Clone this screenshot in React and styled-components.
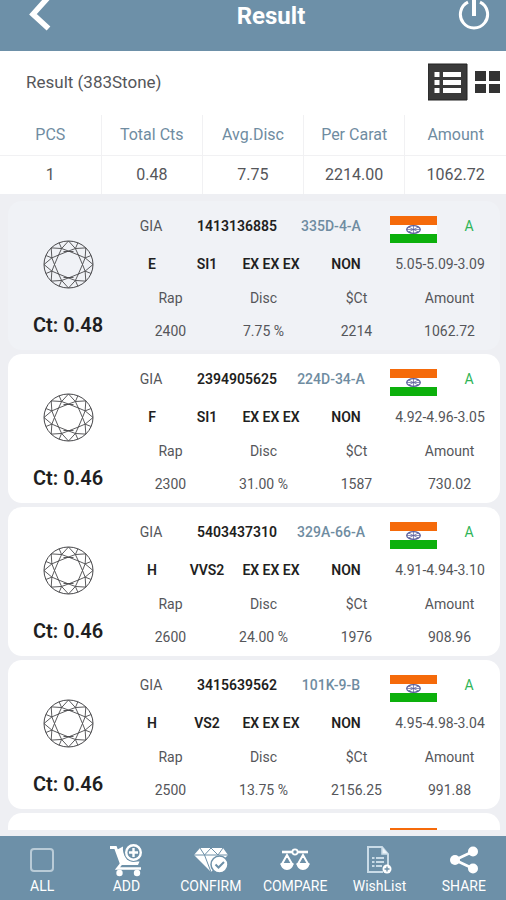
import React, { useState } from 'react';
import styled, { createGlobalStyle, ThemeProvider } from 'styled-components';

const theme = {
  colors: {
    primary: '#6d90a8',
    page: '#eeeff3',
    selected: '#f0f2f6',
    card: '#ffffff',
    border: '#f1f1f3',
    text: '#1f1f22',
    textSecondary: '#55565a',
    link: '#6f8ca1',
    available: '#2fb457',
  },
};

const GlobalStyle = createGlobalStyle`
  * {
    box-sizing: border-box;
  }

  body {
    margin: 0;
    font-family: Roboto, 'Liberation Sans', sans-serif;
    color: ${({ theme }) => theme.colors.text};
    background: ${({ theme }) => theme.colors.page};
  }

  button {
    font-family: inherit;
    border: 0;
    padding: 0;
    background: none;
    cursor: pointer;
  }
`;

const Screen = styled.div`
  display: flex;
  flex-direction: column;
  height: 100vh;
`;

const Header = styled.header`
  flex: none;
  display: grid;
  grid-template-columns: 72px 1fr 44px;
  align-items: center;
  padding: 0 10px 19px 18px;
  background: ${({ theme }) => theme.colors.primary};
  color: #fff;
`;

const HeaderTitle = styled.h1`
  margin: 0;
  font-size: 24px;
  line-height: 32px;
  font-weight: 700;
  text-align: center;
`;

const HeaderButton = styled.button`
  display: flex;
  justify-content: center;
  color: #fff;
  width: 44px;
  height: 32px;
`;

const Toolbar = styled.div`
  flex: none;
  display: flex;
  align-items: center;
  gap: 7px;
  padding: 12px 5px 14px 26px;
  background: #fff;
`;

const ToolbarTitle = styled.h2`
  flex: 1;
  margin: 0;
  font-size: 17px;
  line-height: 20px;
  font-weight: 400;
  color: ${({ theme }) => theme.colors.textSecondary};
`;

const ViewButton = styled.button`
  display: flex;
  color: #333;
`;

const SummaryTable = styled.table`
  flex: none;
  width: 100%;
  table-layout: fixed;
  border-collapse: collapse;
  background: #fff;
  text-align: center;
  font-size: 16px;

  th,
  td {
    height: 39px;
    padding: 0;
    font-weight: 400;
    color: ${({ theme }) => theme.colors.textSecondary};
  }

  th {
    height: 40px;
    color: ${({ theme }) => theme.colors.link};
    border-bottom: 1px solid ${({ theme }) => theme.colors.border};
  }

  th + th,
  td + td {
    border-left: 1px solid ${({ theme }) => theme.colors.border};
  }
`;

const StoneList = styled.ul`
  flex: 1;
  min-height: 0;
  margin: 0 0 6px;
  padding: 7px 6px 0 8px;
  list-style: none;
  overflow-y: auto;
  scrollbar-width: none;
`;

const StoneCard = styled.li`
  display: grid;
  grid-template-columns: 112px 1fr;
  margin-bottom: 4px;
  padding: 0 4px;
  border-radius: 14px;
  background: ${({ theme, $selected }) => ($selected ? theme.colors.selected : theme.colors.card)};
`;

const StoneShape = styled.div`
  display: flex;
  flex-direction: column;
  align-items: center;
  gap: 24px;
  padding-top: 39px;
`;

const Carat = styled.strong`
  font-size: 20px;
  line-height: 24px;
  font-weight: 600;
`;

const StoneDetails = styled.div`
  display: grid;
  grid-template-rows: 40px 36px 66px;
  padding: 5px 0 2px;
  font-size: 14px;
  line-height: 20px;
  color: ${({ theme }) => theme.colors.textSecondary};
`;

const DetailRow = styled.div`
  display: grid;
  grid-template-columns: 56fr 54fr 74fr 76fr 112fr;
  align-items: center;
  justify-items: center;
  white-space: nowrap;
`;

const CertificateRow = styled(DetailRow)`
  grid-template-columns: 54fr 118fr 70fr 94fr 18fr 18fr;
  align-items: start;
  padding-top: 10px;
`;

const Strong = styled.span`
  font-weight: 600;
  color: ${({ theme }) => theme.colors.text};
`;

const StoneLink = styled.a`
  font-weight: 500;
  color: ${({ theme }) => theme.colors.link};
  text-decoration: none;
`;

const Status = styled.span`
  color: ${({ theme }) => theme.colors.available};
`;

const FlagImage = styled.svg`
  grid-column: 4;
`;

const PriceList = styled.dl`
  display: grid;
  grid-template-columns: repeat(4, 1fr);
  margin: 0;
  text-align: center;
  line-height: 33px;

  dd {
    margin: 0;
  }
`;

const BottomBar = styled.nav`
  flex: none;
  display: grid;
  grid-template-columns: repeat(6, 1fr);
  background: ${({ theme }) => theme.colors.primary};
`;

const Action = styled.button`
  display: flex;
  flex-direction: column;
  align-items: center;
  gap: 2px;
  padding: 8px 0 6px;
  color: #fff;
  font-size: 14px;
  line-height: 16px;
  cursor: pointer;
`;

const ActionIcon = styled.span`
  display: flex;
  align-items: center;
  justify-content: center;
  height: 32px;
`;

const Checkbox = styled.input`
  appearance: none;
  width: 24px;
  height: 24px;
  margin: 0;
  border: 2px solid #b9cbd7;
  border-radius: 4px;

  &:checked {
    background: #fff;
  }
`;

const BackIcon = () => (
  <svg width="24" height="32" viewBox="0 0 24 32" fill="none" stroke="currentColor" strokeWidth="5.5">
    <path d="M20.5-3 5 14.2 20.5 28.5" />
  </svg>
);

const PowerIcon = () => (
  <svg width="32" height="32" viewBox="0 0 32 32" fill="none" stroke="currentColor" strokeWidth="3">
    <path d="M10 2.2A13.6 13.6 0 1 0 22 2.2" />
    <path d="M16-2v18" strokeWidth="4" />
  </svg>
);

const ListIcon = () => (
  <svg width="40" height="38" viewBox="0 0 40 38">
    <path d="M0 1h39v36H0z" fill="#3a3a3a" stroke="#222" />
    <path
      d="M6.500 9h5v5h-5zm0 8h5v5h-5zm0 8h5v5h-5zM15 9h18v5H15zm0 8h18v5H15zm0 8h18v5H15z"
      fill="#fff"
    />
  </svg>
);

const GridIcon = () => (
  <svg width="26" height="24" viewBox="0 0 26 24" fill="currentColor">
    <path d="M0 1h11v10H0zm14 0h11v10H14zM0 14h11v9H0zm14 0h11v9H14z" />
  </svg>
);

const point = (radius, angle) => {
  const rad = (angle * Math.PI) / 180;
  return `${(25.5 + radius * Math.sin(rad)).toFixed(2)} ${(24.5 - radius * 0.96 * Math.cos(rad)).toFixed(2)}`;
};

// Crown facets of a round brilliant, repeated every 45 degrees
const facets = Array.from({ length: 8 }, (_, i) => {
  const a = i * 45;
  return [
    `M${point(14, a)}L${point(14, a + 45)}`,
    `M${point(14, a)}L${point(18, a + 22.5)}L${point(14, a + 45)}`,
    `M${point(24.5, a)}L${point(18, a + 22.5)}L${point(24.5, a + 45)}`,
    `M${point(18, a + 22.5)}L${point(24.5, a + 22.5)}`,
  ].join('');
}).join('');

const RoundCut = () => (
  <svg width="51" height="49" viewBox="0 0 51 49" fill="none" stroke="#48484b">
    <ellipse cx="25.5" cy="24.5" rx="24.5" ry="23.5" />
    <path d={facets} strokeWidth="0.9" />
    <path d="M20.500 11.500h10M20.500 37.500h10" strokeWidth="0.9" />
  </svg>
);

const Flag = () => (
  <FlagImage width="47" height="27" viewBox="0 0 47 27" role="img" aria-label="India">
    <path d="M0 0h47v27H0z" fill="#fff" />
    <path d="M0 0h47v9H0z" fill="#f56a0a" />
    <path d="M0 18h47v9H0z" fill="#0cb00c" />
    <g fill="none" stroke="#5a5f9c">
      <ellipse cx="23.500" cy="13.500" rx="6.800" ry="3.800" strokeWidth="1.300" />
      <path d="M17 13.500h13M23.500 10v7M19 11.200l9 4.600M28 11.200l-9 4.600" strokeWidth="0.700" />
    </g>
  </FlagImage>
);

const CartIcon = () => (
  <svg width="34" height="34" viewBox="0 0 34 34" fill="none" stroke="#fff">
    <path d="M1 4.500h5.500l6 16.500" strokeWidth="3" />
    <path d="M7.500 7 14 3.500c-1 8 4 15 10 15h6.500L29 22H12z" fill="#fff" stroke="none" />
    <path d="m12 21-3.500 4.500H32" strokeWidth="2.600" />
    <circle cx="24.500" cy="9.500" r="9.500" fill="#6d90a8" stroke="none" />
    <circle cx="24.500" cy="9.500" r="7.300" strokeWidth="2.400" />
    <path d="M24.500 5v9M20 9.500h9" strokeWidth="2.400" />
    <circle cx="10.500" cy="30" r="3.200" fill="#fff" stroke="none" />
    <circle cx="28" cy="30" r="3.200" fill="#fff" stroke="none" />
  </svg>
);

const ConfirmIcon = () => (
  <svg width="34" height="28" viewBox="0 0 34 28" fill="none" stroke="#6d90a8">
    <path d="M6 2h23l5 7-17 17L0 9z" fill="#fff" stroke="none" />
    <path d="M0 9h34M6 2l4.500 7L17 2l7 7 5-7M10.500 9 17 26" strokeWidth="1" />
    <circle cx="25.500" cy="18.500" r="8.500" fill="#fff" strokeWidth="1.500" />
    <path d="m21.500 18.500 3 3 5.500-5.500" strokeWidth="2" />
  </svg>
);

const CompareIcon = () => (
  <svg width="30" height="26" viewBox="0 0 30 26" fill="none" stroke="#fff">
    <path d="M2 5h26" strokeWidth="2.600" />
    <circle cx="15" cy="5" r="2.600" fill="#6d90a8" strokeWidth="1.700" />
    <path d="M7 8 2 17h10zM23 8l-5 9h10z" strokeWidth="2" />
    <path d="M.5 16h13c0 4-3 7-6.500 7S.5 20 .5 16zM16.500 16h13c0 4-3 7-6.500 7s-6.500-3-6.500-7z" fill="#fff" stroke="none" />
  </svg>
);

const WishListIcon = () => (
  <svg width="26" height="30" viewBox="0 0 26 30" fill="none" stroke="#c9dbe7">
    <path d="M17 27H2V2h14l6 7v11" strokeWidth="2" />
    <path d="M16 2v7h6" fill="#eef5fa" strokeWidth="1.500" />
    <path d="M6 13h2.500M6 17h2.500M6 21h2.500M10 13h8M10 17h8M10 21h6" strokeWidth="1.800" />
    <circle cx="21" cy="24" r="4.500" fill="#fff" stroke="none" />
    <path d="M21 21.500v5M18.500 24h5" stroke="#6d90a8" strokeWidth="1.300" />
  </svg>
);

const ShareIcon = () => (
  <svg width="30" height="28" viewBox="0 0 30 28" fill="#fff">
    <path d="M24 5.500 6 14l18 8.500" fill="none" stroke="#fff" strokeWidth="2.800" />
    <circle cx="24" cy="5.500" r="5" />
    <circle cx="6" cy="14" r="5" />
    <circle cx="24" cy="22.500" r="5" />
  </svg>
);

const summary = [
  { label: 'PCS', value: '1' },
  { label: 'Total Cts', value: '0.48' },
  { label: 'Avg.Disc', value: '7.75' },
  { label: 'Per Carat', value: '2214.00' },
  { label: 'Amount', value: '1062.72' },
];

const stones = [
  { cert: '1413136885', id: '335D-4-A', carat: '0.48', color: 'E', clarity: 'SI1', size: '5.05-5.09-3.09', rap: '2400', disc: '7.75 %', perCt: '2214', amount: '1062.72' },
  { cert: '2394905625', id: '224D-34-A', carat: '0.46', color: 'F', clarity: 'SI1', size: '4.92-4.96-3.05', rap: '2300', disc: '31.00 %', perCt: '1587', amount: '730.02' },
  { cert: '5403437310', id: '329A-66-A', carat: '0.46', color: 'H', clarity: 'VVS2', size: '4.91-4.94-3.10', rap: '2600', disc: '24.00 %', perCt: '1976', amount: '908.96' },
  { cert: '3415639562', id: '101K-9-B', carat: '0.46', color: 'H', clarity: 'VS2', size: '4.95-4.98-3.04', rap: '2500', disc: '13.75 %', perCt: '2156.25', amount: '991.88' },
];

const actions = [
  { label: 'ADD', icon: <CartIcon /> },
  { label: 'CONFIRM', icon: <ConfirmIcon /> },
  { label: 'COMPARE', icon: <CompareIcon /> },
  { label: 'WishList', icon: <WishListIcon /> },
  { label: 'SHARE', icon: <ShareIcon /> },
];

const Stone = ({ stone, selected, onSelect }) => (
  <StoneCard $selected={selected} onClick={onSelect}>
    <StoneShape>
      <RoundCut />
      <Carat>Ct: {stone.carat}</Carat>
    </StoneShape>
    <StoneDetails>
      <CertificateRow>
        <span>GIA</span>
        <Strong>{stone.cert}</Strong>
        <StoneLink href="#stone">{stone.id}</StoneLink>
        <Flag />
        <Status>A</Status>
      </CertificateRow>
      <DetailRow>
        <Strong>{stone.color}</Strong>
        <Strong>{stone.clarity}</Strong>
        <Strong>EX EX EX</Strong>
        <Strong>NON</Strong>
        <span>{stone.size}</span>
      </DetailRow>
      <PriceList>
        <div>
          <dt>Rap</dt>
          <dd>{stone.rap}</dd>
        </div>
        <div>
          <dt>Disc</dt>
          <dd>{stone.disc}</dd>
        </div>
        <div>
          <dt>$Ct</dt>
          <dd>{stone.perCt}</dd>
        </div>
        <div>
          <dt>Amount</dt>
          <dd>{stone.amount}</dd>
        </div>
      </PriceList>
    </StoneDetails>
  </StoneCard>
);

const PendingStone = () => (
  <StoneCard>
    <StoneShape>
      <RoundCut />
    </StoneShape>
    <StoneDetails>
      <CertificateRow>
        <Flag />
      </CertificateRow>
    </StoneDetails>
  </StoneCard>
);

const App = () => {
  const [selected, setSelected] = useState(0);

  return (
    <ThemeProvider theme={theme}>
      <GlobalStyle />
      <Screen>
        <Header>
          <HeaderButton aria-label="Back">
            <BackIcon />
          </HeaderButton>
          <HeaderTitle>Result</HeaderTitle>
          <HeaderButton aria-label="Log out">
            <PowerIcon />
          </HeaderButton>
        </Header>

        <Toolbar>
          <ToolbarTitle>Result (383Stone)</ToolbarTitle>
          <ViewButton aria-label="List view">
            <ListIcon />
          </ViewButton>
          <ViewButton aria-label="Grid view">
            <GridIcon />
          </ViewButton>
        </Toolbar>

        <SummaryTable>
          <thead>
            <tr>
              {summary.map((item) => (
                <th key={item.label} scope="col">{item.label}</th>
              ))}
            </tr>
          </thead>
          <tbody>
            <tr>
              {summary.map((item) => (
                <td key={item.label}>{item.value}</td>
              ))}
            </tr>
          </tbody>
        </SummaryTable>

        <StoneList>
          {stones.map((stone, index) => (
            <Stone
              key={stone.cert}
              stone={stone}
              selected={index === selected}
              onSelect={() => setSelected(index)}
            />
          ))}
          <PendingStone />
        </StoneList>

        <BottomBar>
          <Action as="label" htmlFor="select-all">
            <ActionIcon>
              <Checkbox id="select-all" type="checkbox" />
            </ActionIcon>
            ALL
          </Action>
          {actions.map((action) => (
            <Action key={action.label}>
              <ActionIcon>{action.icon}</ActionIcon>
              {action.label}
            </Action>
          ))}
        </BottomBar>
      </Screen>
    </ThemeProvider>
  );
};

export default App;
